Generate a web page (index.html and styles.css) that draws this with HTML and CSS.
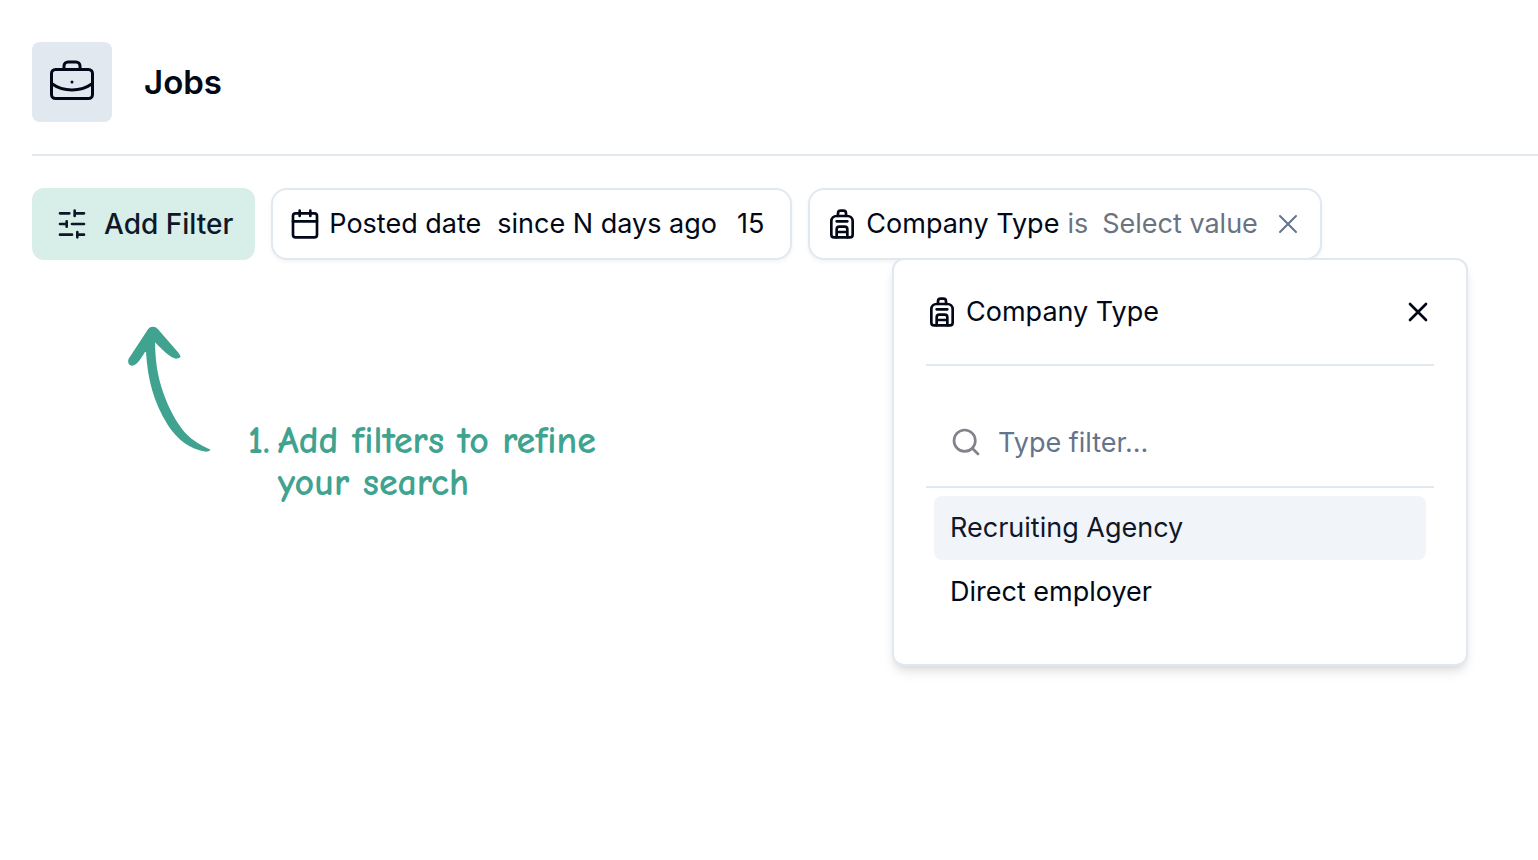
FILE: index.html
```html
<!DOCTYPE html>
<html lang="en">
<head>
<meta charset="utf-8">
<meta name="viewport" content="width=device-width, initial-scale=1">
<title>Jobs</title>
<link rel="stylesheet" href="styles.css">
</head>
<body>
<svg class="sprite" aria-hidden="true">
  <symbol id="backpack" viewBox="0 0 24 24">
    <path d="M4 10a4 4 0 0 1 4-4h8a4 4 0 0 1 4 4v10a2 2 0 0 1-2 2H6a2 2 0 0 1-2-2z"/>
    <path d="M9 6V4a2 2 0 0 1 2-2h2a2 2 0 0 1 2 2v2M8 10h8M8 18h8M8 22v-6a2 2 0 0 1 2-2h4a2 2 0 0 1 2 2v6"/>
  </symbol>
  <symbol id="cross" viewBox="0 0 24 24"><path d="M18 6 6 18M6 6l12 12"/></symbol>
</svg>
<header class="page-header">
  <div class="page-icon">
    <svg class="briefcase" viewBox="0 0 48 48" aria-hidden="true">
      <rect x="3.5" y="11.5" width="41" height="29" rx="4"/>
      <path d="M16 11.500V8a4 4 0 0 1 4-4h8a4 4 0 0 1 4 4v3.500M3.500 25.500c12 8.600 29 8.600 41 0"/>
      <path d="M24 24h.01"/>
    </svg>
  </div>
  <h1 class="title">Jobs</h1>
</header>
<main class="content">
  <div class="filters">
    <button class="add-filter" type="button">
      <svg class="icon" viewBox="0 0 24 24" aria-hidden="true"><path d="M21 4h-7M10 4H3M21 12h-9M8 12H3M21 20h-5M12 20H3M14 2v4M8 10v4M16 18v4"/></svg>
      Add Filter
    </button>
    <div class="chip">
      <svg class="icon" viewBox="0 0 24 24" aria-hidden="true"><rect x="3" y="4" width="18" height="18" rx="2"/><path d="M16 2v4M8 2v4M3 10h18"/></svg>
      <span class="chip-name">Posted date</span>
      <button class="chip-operator wide" type="button">since N days ago</button>
      <button class="chip-value number" type="button">15</button>
    </div>
    <div class="chip">
      <svg class="icon" aria-hidden="true"><use href="#backpack"/></svg>
      <span class="chip-name">Company Type</span>
      <button class="chip-operator muted" type="button">is</button>
      <div class="value-picker">
        <button class="chip-value muted" type="button" aria-expanded="true">Select value</button>
        <section class="popover" aria-label="Company Type">
          <div class="popover-header">
            <svg class="icon" aria-hidden="true"><use href="#backpack"/></svg>
            <h2 class="popover-title">Company Type</h2>
            <button class="close" type="button" aria-label="Close"><svg class="icon" aria-hidden="true"><use href="#cross"/></svg></button>
          </div>
          <label class="search">
            <svg class="icon search-icon" viewBox="0 0 24 24" aria-hidden="true"><circle cx="11" cy="11" r="8"/><path d="m21 21-4.300-4.300"/></svg>
            <input class="search-input" type="text" placeholder="Type filter..." aria-label="Type filter">
          </label>
          <div class="options">
            <button class="option selected" type="button">Recruiting Agency</button>
            <button class="option" type="button">Direct employer</button>
          </div>
        </section>
      </div>
      <button class="remove" type="button" aria-label="Remove filter"><svg class="icon thin" aria-hidden="true"><use href="#cross"/></svg></button>
    </div>
  </div>
  <div class="hint">
    <svg class="arrow" viewBox="18 24 258 384" aria-hidden="true">
      <path d="M84 34C91 24 106 24 114 34L174 103Q180 111 182 116Q179 121 168 122C152 121 128 96 105 73C106 125 111 165 124 206C138 252 159 296 186 333C208 362 238 380 272 395Q267 401 258 401C212 394 172 366 143 320C101 252 83 186 78 102L75 102C62 121 53 142 36 143C26 142 22 131 26 122Z"/>
    </svg>
    <p class="hint-text"><span>1.</span><span>Add filters to refine<br>your search</span></p>
  </div>
</main>
</body>
</html>
```
FILE: styles.css
```css
* { box-sizing: border-box; }

body {
  min-height: 100vh;
  margin: 0;
  background: #fff;
  color: #020817;
  font-family: Inter, "Liberation Sans", sans-serif;
  font-size: 27px;
  line-height: 40px;
}

button, input {
  margin: 0;
  padding: 0;
  border: 0;
  background: none;
  color: inherit;
  font: inherit;
}

button { cursor: pointer; white-space: nowrap; }

svg {
  flex: none;
  fill: none;
  stroke: currentColor;
  stroke-width: 2;
  stroke-linecap: round;
  stroke-linejoin: round;
}

.sprite { position: absolute; width: 0; height: 0; }
.icon { display: block; width: 32px; height: 32px; }
.thin { stroke-width: 1.5; }

.page-header {
  display: flex;
  align-items: center;
  gap: 32px;
  margin-left: 32px;
  padding: 42px 0 32px;
  border-bottom: 2px solid #e2e8f0;
}

.page-icon {
  display: grid;
  place-items: center;
  width: 80px;
  height: 80px;
  border-radius: 8px;
  background: #e2e8f0;
}

.briefcase { width: 48px; height: 48px; stroke-width: 3; }
.title { margin: 0; font-size: 33px; font-weight: 600; }

.content { padding: 32px; }
.filters { display: flex; align-items: center; gap: 16px; }

.add-filter {
  display: flex;
  align-items: center;
  gap: 16px;
  height: 72px;
  padding: 0 22px 0 24px;
  border-radius: 12px;
  background: #d7efe8;
  color: #0f172a;
  font-size: 28px;
  font-weight: 500;
}

.chip {
  display: flex;
  align-items: center;
  height: 72px;
  padding: 0 16px;
  border: 2px solid #e2e8f0;
  border-radius: 16px;
  background: #fff;
  box-shadow: 0 2px 4px rgb(0 0 0 / 5%);
  white-space: nowrap;
}

.chip-name { margin-left: 8px; }
.chip-operator { margin-left: 8px; }
.wide { margin-left: 16px; }
.chip-value { margin-left: 14px; }
.number { margin: 0 10px 0 20px; }
.muted { color: #6b7280; }
.value-picker { position: relative; }
.remove { margin-left: 14px; color: #64748b; }

.popover {
  position: absolute;
  top: 54px;
  left: 50%;
  width: 576px;
  margin-left: -281px;
  padding: 32px;
  border: 2px solid #e2e8f0;
  border-radius: 12px;
  background: #fff;
  box-shadow: 0 8px 12px -2px rgb(0 0 0 / 10%), 0 4px 8px -4px rgb(0 0 0 / 10%);
}

.popover-header {
  display: flex;
  align-items: center;
  gap: 8px;
  padding-bottom: 32px;
  border-bottom: 2px solid #e2e8f0;
}

.popover-title { margin: 0; font-size: 27px; font-weight: 400; }
.close { margin-left: auto; }

.search {
  display: flex;
  align-items: center;
  gap: 16px;
  margin-top: 32px;
  padding: 0 24px;
  border-bottom: 2px solid #e2e8f0;
}

.search-icon { color: #808389; }
.search-input { flex: 1; min-width: 0; height: 88px; outline: 0; }
.search-input::placeholder { color: #64748b; opacity: 1; }

.options { display: flex; flex-direction: column; padding: 8px; }
.option { padding: 12px 16px; border-radius: 8px; text-align: left; }
.selected { background: #f1f5f9; color: #0f172a; }

.hint {
  display: flex;
  align-items: flex-start;
  gap: 36px;
  padding: 66px 0 0 94px;
  color: #40a38f;
}

.arrow { width: 86px; height: 128px; fill: currentColor; stroke: none; }

.hint-text {
  display: flex;
  gap: 8px;
  margin: 0;
  padding-top: 94px;
  font-family: "Comic Neue", Lato, sans-serif;
  font-size: 38px;
  font-weight: 700;
  line-height: 42px;
}
```
